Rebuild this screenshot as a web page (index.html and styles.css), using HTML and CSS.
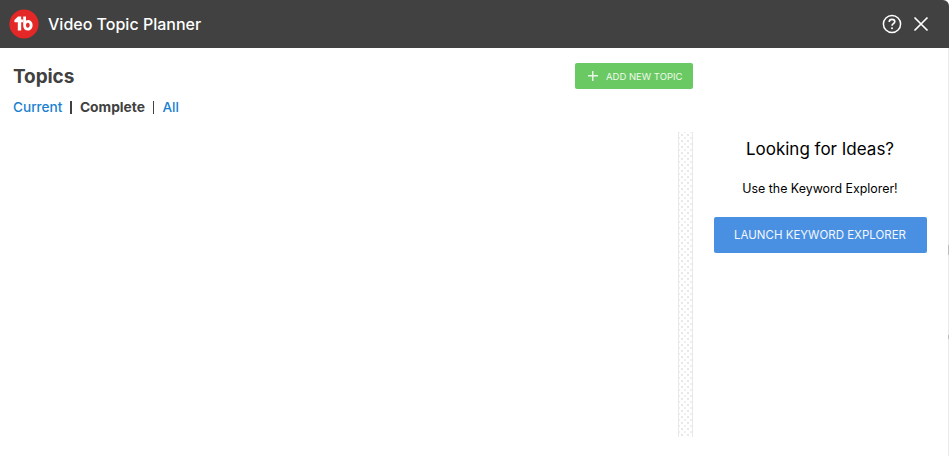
FILE: index.html
```html
<!DOCTYPE html>
<html lang="en">
<head>
<meta charset="utf-8">
<title>Video Topic Planner</title>
<link rel="stylesheet" href="styles.css">
</head>
<body>
<div class="window">
  <header class="titlebar">
    <div class="brand">
      <svg class="logo" viewBox="0 0 30 30" width="30" height="30" aria-hidden="true">
        <circle cx="15" cy="15" r="14.6" fill="#e42727"/>
        <path d="M5.4 11 L9 7.6 H12.2 V10.6 H14 V13.2 H12.2 V21.6 H8.8 V13.2 H5.4 Z" fill="#fff"/>
        <path fill-rule="evenodd" d="M14.2 7.6 H17 V11.6 C17.6 11.2 18.2 11 19 11 C21.6 11 23.6 13.2 23.6 16.2 C23.6 19.3 21.6 21.6 18.8 21.6 C16 21.6 14.2 19.6 14.2 16.6 Z M18.8 13.8 C17.7 13.8 17 14.8 17 16.2 C17 17.7 17.7 18.7 18.8 18.7 C19.9 18.7 20.7 17.7 20.7 16.2 C20.7 14.8 19.9 13.8 18.8 13.8 Z" fill="#fff"/>
      </svg>
      <h1 class="app-title">Video Topic Planner</h1>
    </div>
    <div class="actions">
      <svg class="icon" viewBox="0 0 20 20" width="20" height="20" aria-hidden="true">
        <circle cx="10" cy="10" r="8.6" fill="none" stroke="#fff" stroke-width="1.5"/>
        <path d="M7.2 8 C7.2 6.3 8.5 5.4 10 5.4 C11.6 5.4 12.8 6.3 12.8 7.8 C12.8 9.6 10 9.8 10 11.8" fill="none" stroke="#fff" stroke-width="1.6"/>
        <circle cx="10" cy="14.2" r="1" fill="#fff"/>
      </svg>
      <svg class="icon" viewBox="0 0 16 16" width="16" height="16" aria-hidden="true">
        <path d="M1.5 1.5 L14.5 14.5 M14.5 1.5 L1.5 14.5" fill="none" stroke="#fff" stroke-width="1.7"/>
      </svg>
    </div>
  </header>
  <main class="content">
    <section class="topics">
      <div class="topics-head">
        <div class="topics-heading">
          <h2 class="topics-title">Topics</h2>
          <nav class="filters">
            <a class="filter">Current</a><span class="sep"></span><b class="filter-active">Complete</b><span class="sep"></span><a class="filter">All</a>
          </nav>
        </div>
        <button class="add-btn"><span class="plus"></span>ADD NEW TOPIC</button>
      </div>
      <div class="rail-row">
        <div class="rail"></div>
      </div>
    </section>
    <aside class="ideas">
      <h3 class="ideas-title">Looking for Ideas?</h3>
      <p class="ideas-text">Use the Keyword Explorer!</p>
      <button class="launch-btn">LAUNCH KEYWORD EXPLORER</button>
    </aside>
  </main>
</div>
</body>
</html>
```
FILE: styles.css
```css
* { box-sizing: border-box; }
html, body { margin: 0; height: 100%; background: #fff; overflow: hidden; }
body { font-family: "Inter", "Liberation Sans", sans-serif; }
.window { width: 949px; height: 456px; display: flex; flex-direction: column; }
.titlebar {
  height: 48px; background: #414141; display: flex; align-items: center;
  justify-content: space-between; padding: 0 20px 0 9px; border-top-right-radius: 6px;
  flex: none;
}
.brand { display: flex; align-items: center; gap: 9px; }
.logo { display: block; }
.app-title { margin: 0; color: #fff; font-size: 16px; font-weight: 500; }
.actions { display: flex; align-items: center; gap: 11px; }
.icon { display: block; }
.content { flex: 1; display: flex; position: relative; border-right: 1px solid #e9e9e9; }
.content::before, .content::after { content: ""; position: absolute; right: -1px; width: 1px; background: #bdbdbd; }
.content::before { top: 197px; height: 10px; }
.content::after { top: 287px; height: 4px; }
.topics { width: 693px; flex: none; display: flex; flex-direction: column; }
.topics-head { display: flex; justify-content: space-between; align-items: flex-start; padding: 15px 0 0 13px; height: 84px; flex: none; }
.topics-title { margin: 0; font-size: 19px; line-height: 28px; font-weight: 700; letter-spacing: -0.1px; color: #414141; }
.filters { display: flex; align-items: center; margin-top: 7px; font-size: 14px; line-height: 18px; }
.filter { color: #1a7fd0; font-size: 13.6px; font-weight: 500; }
.filter-active { color: #414141; font-weight: 700; font-size: 13.8px; }
.sep { width: 1.5px; height: 13px; background: #414141; margin: 0 8px; }
.add-btn {
  height: 26px; width: 118px; border: 0; border-radius: 2px; background: #6bc964; color: #eefaec;
  font: 400 9.5px "Inter", sans-serif; display: flex; align-items: center; padding: 0 0 0 13px; gap: 8px;
}
.plus { width: 10px; height: 10px; background:
  linear-gradient(#e8f7e6,#e8f7e6) center/10px 1.5px no-repeat,
  linear-gradient(#e8f7e6,#e8f7e6) center/1.5px 10px no-repeat; }
.rail-row { flex: 1; display: flex; justify-content: flex-end; padding-bottom: 19px; }
.rail {
  width: 15px; border-left: 1px solid #e8e8e8; border-right: 1px solid #e8e8e8;
  background-color: #fff;
  background-image:
    radial-gradient(circle, #e6e6e6 0.7px, transparent 0.8px),
    radial-gradient(circle, #eeeeee 0.7px, transparent 0.8px);
  background-size: 6px 6px, 6px 6px;
  background-position: 0 0, 3px 3px;
}
.ideas { flex: 1; display: flex; flex-direction: column; align-items: center; padding: 90px 1px 0 0; }
.ideas-title { margin: 0; font-size: 17px; line-height: 22px; font-weight: 400; color: #000; }
.ideas-text { margin: 20px 0 0; font-size: 12.4px; line-height: 18px; color: #000; }
.launch-btn {
  margin-top: 19px; width: 213px; height: 36px; border: 0; border-radius: 2px;
  background: #4a90e2; color: #f2f7fd; font: 400 11.5px "Inter", sans-serif;
}
```
